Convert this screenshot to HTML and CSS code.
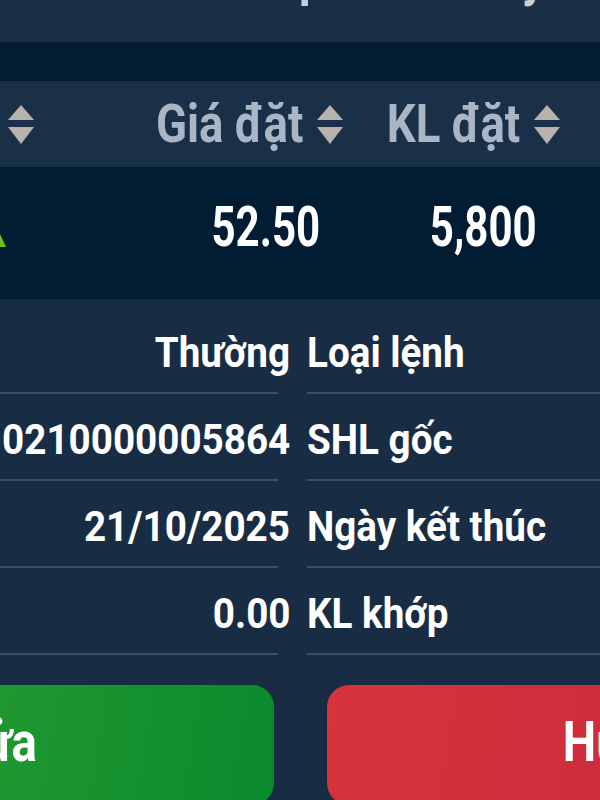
FILE: index.html
```html
<!DOCTYPE html>
<html lang="vi">
<head>
  <meta charset="UTF-8" />
  <meta name="viewport" content="width=device-width, initial-scale=1" />
  <title>Chi tiết lệnh</title>
  <link rel="stylesheet" href="styles.css">
</head>
<body>
  <div class="screen">
    <div class="topbar">
      <span class="title sq sq-left">Chi tiết khớp tới hôm nay</span>
    </div>
    <div class="band"></div>

    <div class="grid head">
      <div class="cell"><span class="sq">Mã CK</span><svg class="sort" viewBox="0 0 26 39"><path d="M13 0 L26 15 H0 Z M0 22 H26 L13 39 Z"/></svg></div>
      <div class="cell"><span class="sq">Giá đặt</span><svg class="sort" viewBox="0 0 26 39"><path d="M13 0 L26 15 H0 Z M0 22 H26 L13 39 Z"/></svg></div>
      <div class="cell"><span class="sq">KL đặt</span><svg class="sort" viewBox="0 0 26 39"><path d="M13 0 L26 15 H0 Z M0 22 H26 L13 39 Z"/></svg></div>
      <div class="cell"><span class="sq">Trạng thái</span></div>
    </div>

    <div class="grid data">
      <div class="cell sym"><span class="sq">FPT</span><svg class="up" viewBox="0 0 22 24"><path d="M11 0 L22 24 H0 Z"/></svg></div>
      <div class="cell"><span class="sq">52.50</span></div>
      <div class="cell"><span class="sq">5,800</span></div>
      <div class="cell"><span class="sq">Chờ khớp</span></div>
    </div>

    <div class="details">
      <div class="row">
        <div class="val"><span class="sq">Thường</span></div>
        <div class="lbl"><span class="sq sq-left">Loại lệnh</span></div>
      </div>
      <div class="row">
        <div class="val"><span class="sq">0210000005864</span></div>
        <div class="lbl"><span class="sq sq-left">SHL gốc</span></div>
      </div>
      <div class="row">
        <div class="val"><span class="sq">21/10/2025</span></div>
        <div class="lbl"><span class="sq sq-left">Ngày kết thúc</span></div>
      </div>
      <div class="row">
        <div class="val"><span class="sq">0.00</span></div>
        <div class="lbl"><span class="sq sq-left">KL khớp</span></div>
      </div>
    </div>

    <div class="actions">
      <button class="btn btn-edit"><span class="sq sq-mid">Sửa</span></button>
      <button class="btn btn-cancel"><span class="sq sq-mid">Hủy</span></button>
    </div>
  </div>
</body>
</html>
```

FILE: styles.css
```css
body {
  margin: 0;
  background: #182d44;
  font-family: Roboto, 'Liberation Sans', sans-serif;
  font-weight: 700;
  color: #fff;
  overflow: hidden;
  height: 800px;
}

/* the app screen is wider than the window, centred on x=300 */
.screen {
  width: 1164px;
  margin-left: -282px;
}

/* condensed look of the app font */
.sq {
  display: inline-block;
  white-space: nowrap;
  transform-origin: right center;
  transform: scaleX(0.86);
}

.sq-left { transform-origin: left center; }
.sq-mid { transform-origin: center center; }

.topbar {
  background: #1a2f46;
  height: 42px;
  overflow: hidden;
}

.title {
  display: block;
  width: max-content;
  font-size: 53px;
  line-height: 53px;
  letter-spacing: -3px;
  margin-top: -49px;
  margin-left: 378px;
  color: #c9cfd6;
}

.band {
  background: #021c34;
  height: 39px;
}

.grid {
  display: grid;
  grid-template-columns: 316px 309px 217px 1fr;
}

.cell {
  display: flex;
  align-items: center;
  justify-content: flex-end;
}

.head {
  background: #1a3049;
  height: 86px;
  color: #aab6c3;
  font-size: 53px;
}

.head .cell { gap: 14px; }

.sort {
  width: 26px;
  height: 39px;
  fill: #b7b2ac;
  flex-shrink: 0;
}

.data {
  background: #021c34;
  height: 132px;
  font-size: 55px;
}

.data .cell {
  padding: 0 23px 13px 0;
}

.data .sq { transform: scaleX(0.765); }

.data .sym {
  padding-right: 28px;
  gap: 10px;
}

.up {
  width: 22px;
  height: 24px;
  fill: #6cc01c;
  margin-top: 17px;
}

.details {
  padding-top: 8px;
  font-size: 42px;
}

.details .sq { transform: scaleX(0.92); }
.details .sq-left { transform-origin: left center; }

.row {
  display: grid;
  grid-template-columns: 572px 1fr;
  column-gap: 17px;
  height: 87px;
}

.val, .lbl {
  display: flex;
  align-items: center;
  padding-top: 4px;
  background: linear-gradient(#3b5068, #3b5068) no-repeat left bottom / 100% 2px;
}

.val {
  justify-content: flex-end;
  background-size: calc(100% - 12px) 2px;
}

.actions {
  display: grid;
  grid-template-columns: 1fr 1fr;
  column-gap: 53px;
  padding-top: 30px;
}

.btn {
  height: 120px;
  border: none;
  border-radius: 22px;
  color: #fff;
  font-family: inherit;
  font-weight: 700;
  font-size: 55px;
  padding: 0 0 6px;
}

.btn-edit {
  background: linear-gradient(100deg, #34a632, #0a892d);
}

.btn-cancel {
  background: linear-gradient(100deg, #d6343c, #c6283a);
}
```
